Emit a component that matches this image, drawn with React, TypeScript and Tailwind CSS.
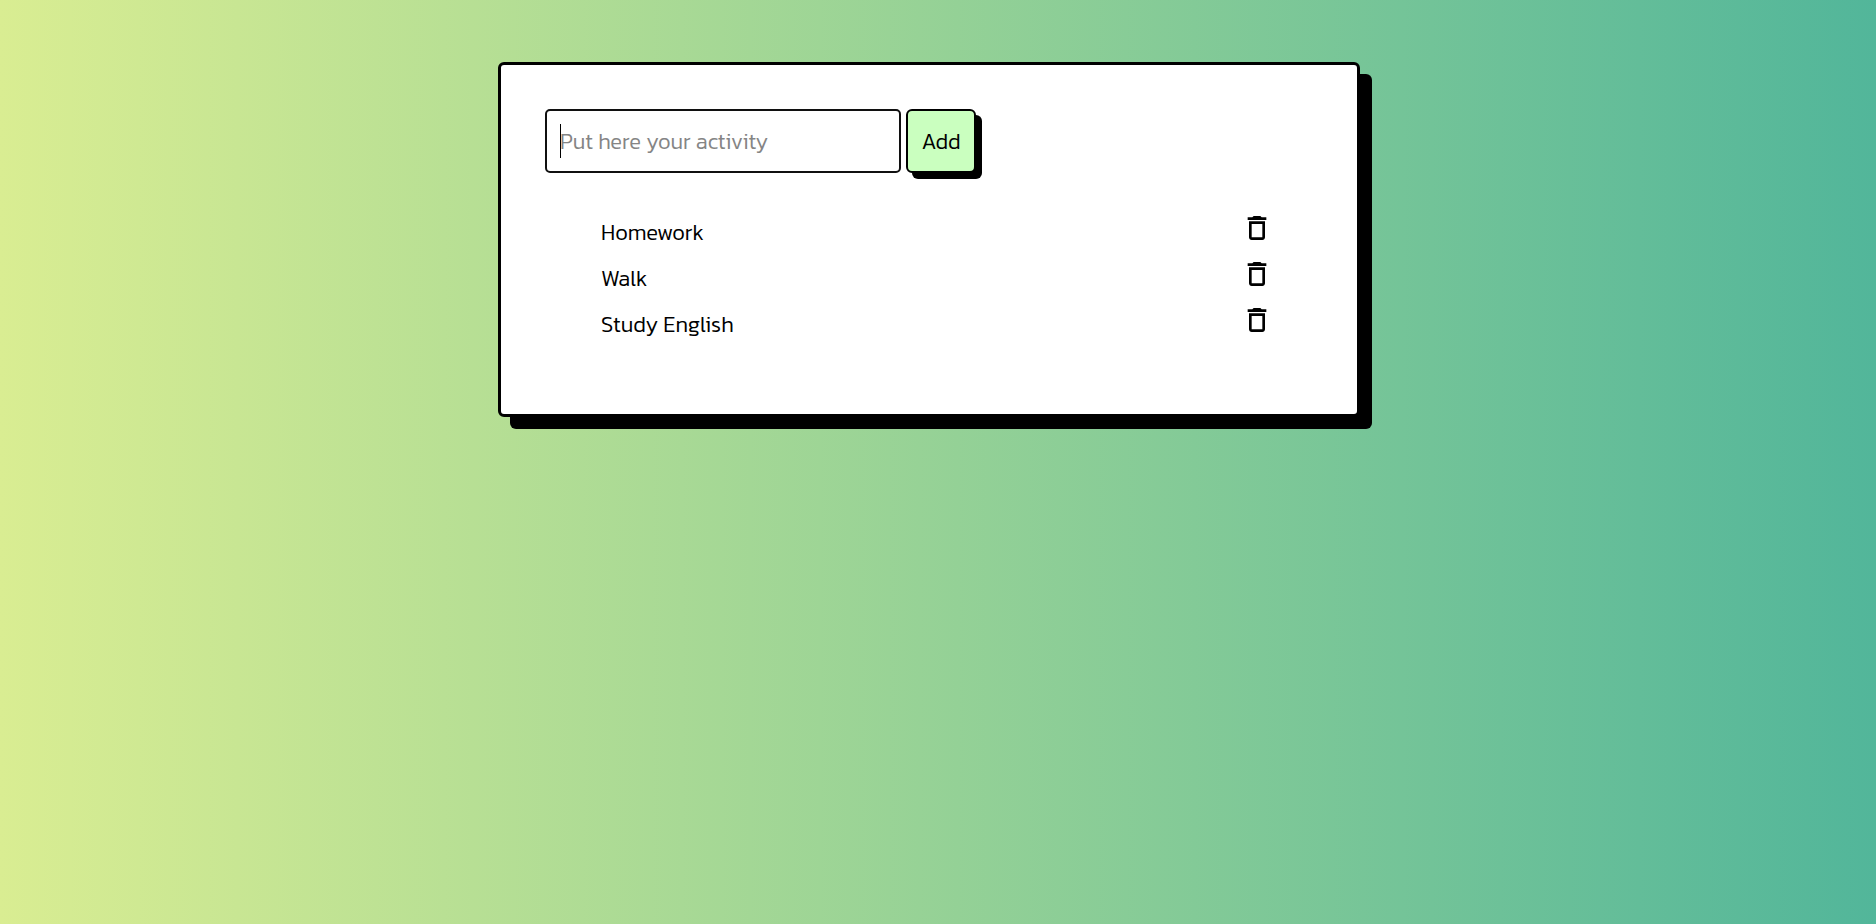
import { useState, type FormEvent } from "react";
import { MdDeleteOutline } from "react-icons/md";

export default function App() {
  const [tasks, setTasks] = useState<string[]>(["Homework", "Walk", "Study English"]);
  const [text, setText] = useState("");

  const addTask = (event: FormEvent) => {
    event.preventDefault();
    const value = text.trim();
    if (!value) return;
    setTasks([...tasks, value]);
    setText("");
  };

  return (
    <div className="min-h-screen bg-[linear-gradient(to_right,#d9ed92,#52b69a)] pt-[62px] pr-[18px] font-['Kanit','Open_Sans',sans-serif] text-[22px] font-light text-black">
      <main className="mx-auto w-full max-w-[862px] rounded-md border-3 border-black bg-white px-11 pt-11 pb-[71px] shadow-[12px_12px_0_#000]">
        <form onSubmit={addTask} className="flex gap-[5px]">
          <div className="relative w-[356px]">
            <input
              aria-label="Activity"
              autoFocus
              autoComplete="off"
              value={text}
              onChange={(event) => setText(event.target.value)}
              placeholder="Put here your activity"
              className="h-16 w-full rounded-[5px] border-2 border-[#101010] bg-white px-[13px] caret-transparent outline-none placeholder:text-[#858585] placeholder:opacity-100"
            />
            {text === "" && <span className="absolute top-[15px] left-[15px] h-[34px] w-px bg-black" />}
          </div>
          <button
            type="submit"
            className="h-16 w-[70px] cursor-pointer rounded-md border-2 border-black bg-[#caffbf] shadow-[6px_6px_0_#000]"
          >
            Add
          </button>
        </form>
        <ul className="mt-8 pr-10 pl-14">
          {tasks.map((task, index) => (
            <li key={index} className="flex h-[46px] items-start justify-between">
              <span className="pt-4 leading-6">{task}</span>
              <button
                type="button"
                aria-label={`Delete ${task}`}
                onClick={() => setTasks(tasks.filter((_, i) => i !== index))}
                className="mt-[7px] cursor-pointer"
              >
                <MdDeleteOutline className="size-8" />
              </button>
            </li>
          ))}
        </ul>
      </main>
    </div>
  );
}
